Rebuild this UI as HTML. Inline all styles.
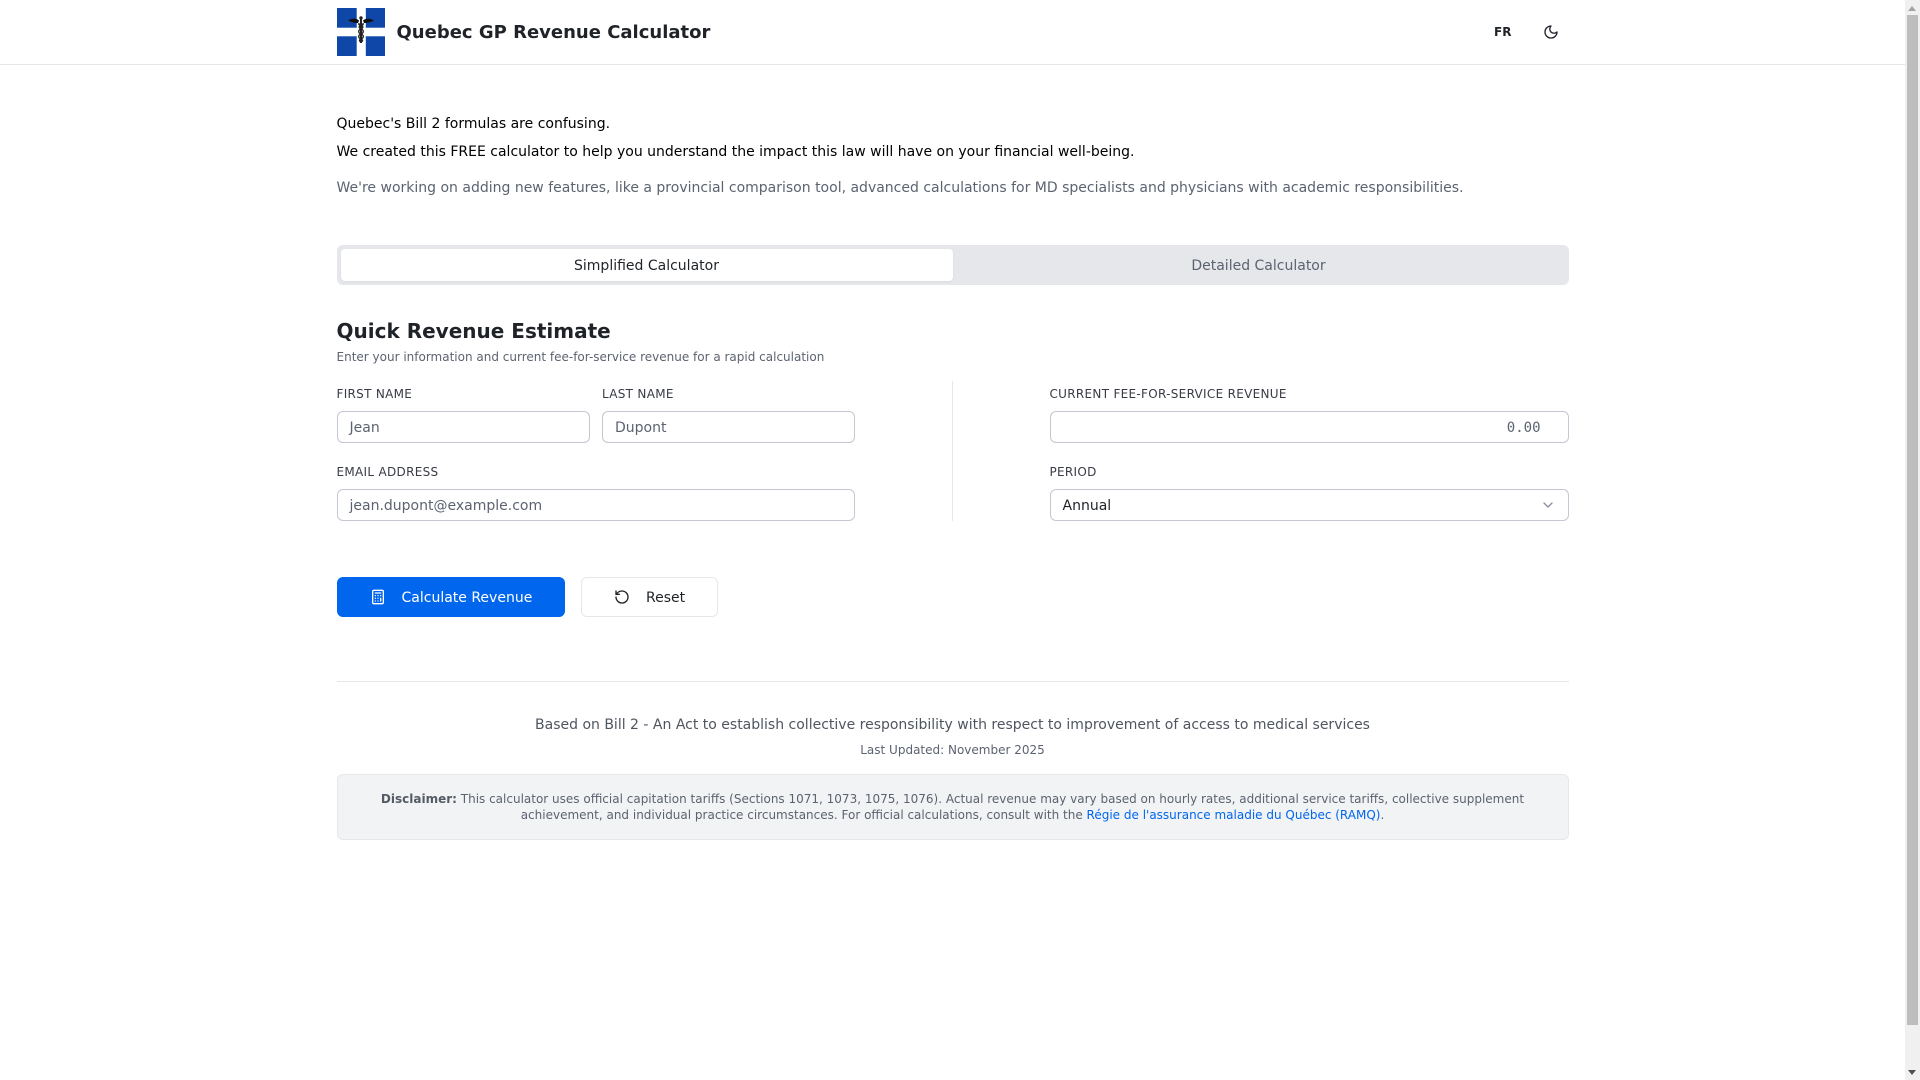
<!DOCTYPE html>
<html lang="en">
<head>
<meta charset="utf-8">
<title>Quebec GP Revenue Calculator</title>
<style>
*{box-sizing:border-box}
html,body{margin:0;padding:0;width:1920px;height:1080px;overflow:hidden;background:#fff}
body{font-family:"DejaVu Sans","Liberation Sans",sans-serif;color:#1f2328;position:relative}
.a{position:absolute;white-space:nowrap}
.label{font-size:12px;line-height:16px;color:#373b44;text-transform:uppercase;letter-spacing:.3px}
.input{position:absolute;height:32px;border:1px solid #c5c7d2;border-radius:6px;background:#fff;font-size:14px;line-height:32px;padding:0 12px;color:#5c6370;white-space:nowrap}
</style>
</head>
<body>
<div class="a" style="left:0;top:0;width:1905px;height:65px;border-bottom:1px solid #e5e7eb"></div>
<svg class="a" style="left:336.5px;top:8px" width="48" height="48" viewBox="0 0 48 48">
<rect width="48" height="48" fill="#fff"/>
<rect x="0" y="0" width="20" height="20" fill="#9db4dc"/>
<rect x="28.5" y="0" width="19.5" height="20" fill="#9db4dc"/>
<rect x="0" y="28" width="20" height="20" fill="#9db4dc"/>
<rect x="28.5" y="28" width="19.5" height="20" fill="#9db4dc"/>
<rect x="0" y="0" width="19.5" height="19.5" fill="#0f47a8"/>
<rect x="29" y="0" width="19" height="19.5" fill="#0f47a8"/>
<rect x="0" y="28.5" width="19.5" height="19.5" fill="#0f47a8"/>
<rect x="29" y="28.5" width="19" height="19.5" fill="#0f47a8"/>
<path d="M11 12.5C15 10 19 10 22 12.5L21 15C18 15 15 14.5 11 12.5ZM37 12.5C33 10 29 10 26 12.5L27 15C30 15 33 14.5 37 12.5Z" fill="#111"/>
<rect x="23" y="9" width="2" height="26" fill="#222"/>
<path d="M21 16C26.5 16 27 20 24 21C21 22 21 25 24 26C27 27 27 30 24 31C22 32 22 33 24 34M27 16C21.5 16 21 20 24 21C27 22 27 25 24 26C21 27 21 30 24 31C26 32 26 33 24 34" fill="none" stroke="#222" stroke-width="1.4"/>
<circle cx="24" cy="10" r="1.7" fill="#222"/>
</svg>
<div class="a" style="left:396.5px;top:20px;font-size:18px;line-height:26px;font-weight:700;color:#1f2328">Quebec GP Revenue Calculator</div>
<div class="a" style="left:1494px;top:24px;font-size:12px;line-height:16px;font-weight:700;color:#1f2328">FR</div>
<svg class="a" style="left:1543px;top:24px" width="16" height="16" viewBox="0 0 24 24" fill="none" stroke="#1f2328" stroke-width="2" stroke-linecap="round" stroke-linejoin="round"><path d="M12 3a6 6 0 0 0 9 9 9 9 0 1 1-9-9Z"/></svg>

<div class="a" style="left:336.5px;top:113px;font-size:14px;line-height:22px;color:#000">Quebec's Bill 2 formulas are confusing.</div>
<div class="a" style="left:336.5px;top:141px;font-size:14px;line-height:22px;color:#000">We created this FREE calculator to help you understand the impact this law will have on your financial well-being.</div>
<div class="a" style="left:336.5px;top:177px;font-size:14px;line-height:22px;color:#5c6370">We're working on adding new features, like a provincial comparison tool, advanced calculations for MD specialists and physicians with academic responsibilities.</div>

<div class="a" style="left:336.5px;top:245px;width:1232px;height:40px;background:#e5e7eb;border-radius:6px"></div>
<div class="a" style="left:340.5px;top:249px;width:612px;height:32px;background:#fff;border-radius:4px;box-shadow:0 1px 2px rgba(0,0,0,.05);text-align:center;font-size:14px;line-height:34px;color:#1f2328">Simplified Calculator</div>
<div class="a" style="left:952.5px;top:249px;width:612px;height:32px;text-align:center;font-size:14px;line-height:34px;color:#5c6370">Detailed Calculator</div>

<div class="a" style="left:336.5px;top:317px;font-size:20px;line-height:28px;font-weight:700;color:#1f2328">Quick Revenue Estimate</div>
<div class="a" style="left:336.5px;top:349px;font-size:12px;line-height:16px;color:#5c6370">Enter your information and current fee-for-service revenue for a rapid calculation</div>

<div class="a label" style="left:336.5px;top:386px">First Name</div>
<div class="input" style="left:336.5px;top:411px;width:253.5px">Jean</div>
<div class="a label" style="left:602px;top:386px">Last Name</div>
<div class="input" style="left:602px;top:411px;width:253px">Dupont</div>
<div class="a label" style="left:336.5px;top:464px">Email Address</div>
<div class="input" style="left:336.5px;top:489px;width:518.5px">jean.dupont@example.com</div>

<div class="a" style="left:952px;top:381px;width:1px;height:140px;background:#e5e7eb"></div>

<div class="a label" style="left:1049.5px;top:386px">Current Fee-for-Service Revenue</div>
<div class="input" style="left:1049.5px;top:411px;width:519px;text-align:right;padding-right:27px;font-family:'DejaVu Sans Mono','Liberation Mono',monospace">0.00</div>
<div class="a label" style="left:1049.5px;top:464px">Period</div>
<div class="input" style="left:1049.5px;top:489px;width:519px;color:#1f2328">Annual</div>
<svg class="a" style="left:1540px;top:497px" width="16" height="16" viewBox="0 0 24 24" fill="none" stroke="#8b909a" stroke-width="2" stroke-linecap="round" stroke-linejoin="round"><path d="m6 9 6 6 6-6"/></svg>

<div class="a" style="left:336.5px;top:577px;width:228.5px;height:40px;background:#0066ee;border-radius:6px"></div>
<svg class="a" style="left:370px;top:589px" width="16" height="16" viewBox="0 0 24 24" fill="none" stroke="#fff" stroke-width="2" stroke-linecap="round" stroke-linejoin="round"><rect width="16" height="20" x="4" y="2" rx="2"/><line x1="8" x2="16" y1="6" y2="6"/><line x1="16" x2="16" y1="14" y2="18"/><path d="M16 10h.01"/><path d="M12 10h.01"/><path d="M8 10h.01"/><path d="M12 14h.01"/><path d="M8 14h.01"/><path d="M12 18h.01"/><path d="M8 18h.01"/></svg>
<div class="a" style="left:401.5px;top:588px;font-size:14px;line-height:20px;color:#fff">Calculate Revenue</div>

<div class="a" style="left:581px;top:577px;width:137px;height:40px;border:1px solid #e5e7eb;border-radius:6px;background:#fff"></div>
<svg class="a" style="left:614px;top:589px" width="16" height="16" viewBox="0 0 24 24" fill="none" stroke="#1f2328" stroke-width="2" stroke-linecap="round" stroke-linejoin="round"><path d="M3 12a9 9 0 1 0 9-9 9.75 9.75 0 0 0-6.74 2.74L3 8"/><path d="M3 3v5h5"/></svg>
<div class="a" style="left:646px;top:588px;font-size:14px;line-height:20px;color:#1f2328">Reset</div>

<div class="a" style="left:336.5px;top:681px;width:1232px;height:1px;background:#e5e7eb"></div>
<div class="a" style="left:336.5px;top:714px;width:1232px;text-align:center;font-size:14px;line-height:22px;color:#4f5560">Based on Bill 2 - An Act to establish collective responsibility with respect to improvement of access to medical services</div>
<div class="a" style="left:336.5px;top:741px;width:1232px;text-align:center;font-size:12px;line-height:18px;color:#5c6370">Last Updated: November 2025</div>

<div class="a" style="left:336.5px;top:774px;width:1232px;height:66px;background:#f2f3f5;border:1px solid #e5e7eb;border-radius:6px"></div>
<div class="a" style="left:336.5px;top:791px;width:1232px;text-align:center;font-size:12px;line-height:16px;color:#5c6370"><b style="color:#555b66">Disclaimer:</b> This calculator uses official capitation tariffs (Sections 1071, 1073, 1075, 1076). Actual revenue may vary based on hourly rates, additional service tariffs, collective supplement<br>achievement, and individual practice circumstances. For official calculations, consult with the <span style="color:#0066ee">Régie de l'assurance maladie du Québec (RAMQ)</span>.</div>

<div class="a" style="left:1905px;top:0;width:15px;height:1080px;background:#f0f0f0"></div>
<div class="a" style="left:1907px;top:15px;width:11px;height:1010px;background:#bdbdbd"></div>
<div class="a" style="left:1908px;top:6px;width:0;height:0;border-left:4.5px solid transparent;border-right:4.5px solid transparent;border-bottom:5px solid #a3a3a3"></div>
<div class="a" style="left:1908px;top:1070px;width:0;height:0;border-left:4.5px solid transparent;border-right:4.5px solid transparent;border-top:5px solid #505050"></div>
</body>
</html>
